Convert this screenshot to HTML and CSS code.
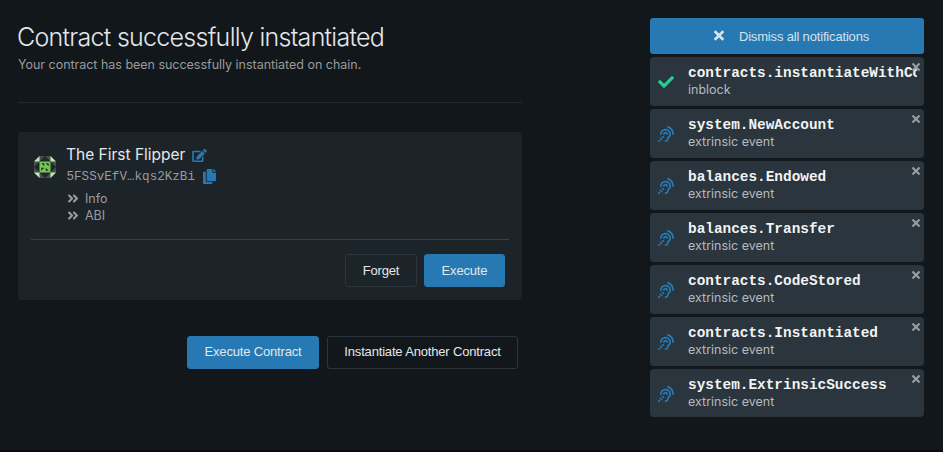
FILE: index.html
```html
<!DOCTYPE html>
<html lang="en">
<head>
<meta charset="utf-8">
<title>Contract successfully instantiated</title>
<link rel="stylesheet" href="styles.css">
</head>
<body>
<svg class="defs" aria-hidden="true">
  <symbol id="times" viewBox="0 0 352 512"><path d="M242.72 256l100.07-100.07c12.28-12.28 12.28-32.19 0-44.48l-22.24-22.24c-12.28-12.28-32.19-12.28-44.48 0L176 189.28 75.93 89.21c-12.28-12.28-32.19-12.28-44.48 0L9.21 111.45c-12.28 12.28-12.28 32.19 0 44.48L109.28 256 9.21 356.07c-12.28 12.28-12.28 32.19 0 44.48l22.24 22.24c12.28 12.28 32.2 12.28 44.48 0L176 322.72l100.07 100.07c12.28 12.28 32.2 12.28 44.48 0l22.24-22.24c12.28-12.28 12.28-32.19 0-44.48L242.72 256z"/></symbol>
  <symbol id="check" viewBox="0 0 512 512"><path d="M173.898 439.404l-166.4-166.4c-9.997-9.997-9.997-26.206 0-36.204l36.203-36.204c9.997-9.998 26.207-9.998 36.204 0L192 312.69 432.095 72.596c9.997-9.997 26.207-9.997 36.204 0l36.203 36.204c9.997 9.997 9.997 26.206 0 36.204l-294.4 294.401c-9.998 9.997-26.207 9.997-36.204-.001z"/></symbol>
  <symbol id="ear" viewBox="0 0 512 512"><path d="M216 260c0 15.464-12.536 28-28 28s-28-12.536-28-28c0-44.112 35.888-80 80-80s80 35.888 80 80c0 15.464-12.536 28-28 28s-28-12.536-28-28c0-13.234-10.767-24-24-24s-24 10.766-24 24zm24-176c-97.047 0-176 78.953-176 176 0 15.464 12.536 28 28 28s28-12.536 28-28c0-66.168 53.832-120 120-120s120 53.832 120 120c0 75.164-71.009 70.311-71.997 143.622L288 404c0 28.673-23.327 52-52 52-15.464 0-28 12.536-28 28s12.536 28 28 28c59.475 0 107.876-48.328 108-107.774.595-34.428 72-48.24 72-144.226 0-97.047-78.953-176-176-176zm-80 236c-17.673 0-32 14.327-32 32s14.327 32 32 32 32-14.327 32-32-14.327-32-32-32zM32 448c-17.673 0-32 14.327-32 32s14.327 32 32 32 32-14.327 32-32-14.327-32-32-32zm480-187.993c0-1.518-.012-3.025-.045-4.531C510.076 140.525 436.157 38.47 327.994 1.511c-14.633-4.998-30.549 2.809-35.55 17.442-5 14.633 2.81 30.549 17.442 35.55 85.906 29.354 144.61 110.513 146.077 201.953l.003.188c.026 1.118.033 2.236.033 3.363 0 15.464 12.536 28 28 28s28.001-12.536 28.001-28zM152.971 439.029l-80-80L39.03 392.97l80 80 33.941-33.941z"/></symbol>
  <symbol id="edit" viewBox="0 0 576 512"><path d="M402.6 83.2l90.2 90.2c3.8 3.8 3.8 10 0 13.8L274.4 405.6l-92.8 10.3c-12.4 1.4-22.9-9.1-21.5-21.5l10.3-92.8L388.8 83.2c3.8-3.8 10-3.8 13.8 0zm162-22.9l-48.8-48.8c-15.2-15.2-39.9-15.2-55.2 0l-35.4 35.4c-3.8 3.8-3.8 10 0 13.8l90.2 90.2c3.8 3.8 10 3.8 13.8 0l35.4-35.4c15.2-15.3 15.2-40 0-55.2zM384 346.2V448H64V128h229.8c3.2 0 6.2-1.3 8.5-3.5l40-40c7.6-7.6 2.2-20.5-8.5-20.5H48C21.5 64 0 85.5 0 112v352c0 26.5 21.5 48 48 48h352c26.5 0 48-21.5 48-48V306.2c0-10.7-12.9-16-20.5-8.5l-40 40c-2.2 2.3-3.5 5.3-3.5 8.5z"/></symbol>
  <symbol id="copy" viewBox="0 0 448 512"><path d="M320 448v40c0 13.255-10.745 24-24 24H24c-13.255 0-24-10.745-24-24V120c0-13.255 10.745-24 24-24h72v296c0 30.879 25.121 56 56 56h168zm0-344V0H152c-13.255 0-24 10.745-24 24v368c0 13.255 10.745 24 24 24h272c13.255 0 24-10.745 24-24V128H344c-13.2 0-24-10.8-24-24zm120.971-31.029L375.029 7.029A24 24 0 0 0 358.059 0H352v96h96v-6.059a24 24 0 0 0-7.029-16.97z"/></symbol>
  <symbol id="angles" viewBox="0 0 448 512"><path d="M224.3 273l-136 136c-9.4 9.4-24.6 9.4-33.9 0l-22.6-22.6c-9.4-9.4-9.4-24.6 0-33.9l96.4-96.4-96.4-96.4c-9.4-9.4-9.4-24.6 0-33.9L54.3 103c9.4-9.4 24.6-9.4 33.9 0l136 136c9.5 9.4 9.5 24.6.1 34zm192-34l-136-136c-9.4-9.4-24.6-9.4-33.9 0l-22.6 22.6c-9.4 9.4-9.4 24.6 0 33.9l96.4 96.4-96.4 96.4c-9.4 9.4-9.4 24.6 0 33.9l22.6 22.6c9.4 9.4 24.6 9.4 33.9 0l136-136c9.4-9.2 9.4-24.4 0-33.8z"/></symbol>
</svg>
<div class="page">
  <main class="main">
    <h1>Contract successfully instantiated</h1>
    <p class="lead">Your contract has been successfully instantiated on chain.</p>
    <hr class="rule">
    <section class="card">
      <div class="contract">
        <svg class="identicon" viewBox="0 0 24 24">
          <path class="shade" d="M6 0h12l6 6v12l-6 6H6l-6-6V6z"/>
          <path class="ink" d="M6 6l6-6 6 6v12l-6 6-6-6zM6 6l-6 6 6 6zM18 6l6 6-6 6z"/>
          <path class="pale" d="M6 0v6H0zM18 0v6h6zM6 24v-6H0zM18 24v-6h6z"/>
          <path class="leaf" d="M6 6h12v12H6z"/>
          <path class="ink" d="M8 8h3.2v3.2zM16 8h-3.2l3.2 3.2zM8 16v-3.2h3.2zM16 16l-3.2-3.2v3.2z"/>
        </svg>
        <div class="details">
          <div class="name"><span>The First Flipper</span><svg class="edit"><use href="#edit"/></svg></div>
          <div class="address"><span>5FSSvEfV…kqs2KzBi</span><svg class="copy"><use href="#copy"/></svg></div>
          <div class="toggle"><svg class="angles"><use href="#angles"/></svg><span>Info</span></div>
          <div class="toggle"><svg class="angles"><use href="#angles"/></svg><span>ABI</span></div>
        </div>
      </div>
      <div class="card-actions">
        <button class="btn forget">Forget</button>
        <button class="btn primary execute">Execute</button>
      </div>
    </section>
    <div class="actions">
      <button class="btn primary run">Execute Contract</button>
      <button class="btn another">Instantiate Another Contract</button>
    </div>
  </main>
  <aside class="notes">
    <button class="dismiss"><svg class="dismiss-x"><use href="#times"/></svg><span>Dismiss all notifications</span></button>
    <div class="note"><svg class="status done"><use href="#check"/></svg><div class="text"><div class="event">contracts.instantiateWithCode</div><div class="kind">inblock</div></div><svg class="close"><use href="#times"/></svg></div>
    <div class="note"><svg class="status"><use href="#ear"/></svg><div class="text"><div class="event">system.NewAccount</div><div class="kind">extrinsic event</div></div><svg class="close"><use href="#times"/></svg></div>
    <div class="note"><svg class="status"><use href="#ear"/></svg><div class="text"><div class="event">balances.Endowed</div><div class="kind">extrinsic event</div></div><svg class="close"><use href="#times"/></svg></div>
    <div class="note"><svg class="status"><use href="#ear"/></svg><div class="text"><div class="event">balances.Transfer</div><div class="kind">extrinsic event</div></div><svg class="close"><use href="#times"/></svg></div>
    <div class="note"><svg class="status"><use href="#ear"/></svg><div class="text"><div class="event">contracts.CodeStored</div><div class="kind">extrinsic event</div></div><svg class="close"><use href="#times"/></svg></div>
    <div class="note"><svg class="status"><use href="#ear"/></svg><div class="text"><div class="event">contracts.Instantiated</div><div class="kind">extrinsic event</div></div><svg class="close"><use href="#times"/></svg></div>
    <div class="note"><svg class="status"><use href="#ear"/></svg><div class="text"><div class="event">system.ExtrinsicSuccess</div><div class="kind">extrinsic event</div></div><svg class="close"><use href="#times"/></svg></div>
  </aside>
</div>
</body>
</html>
```
FILE: styles.css
```css
* { box-sizing: border-box; }
body {
  margin: 0;
  background: #11171a;
  color: #9a9b9d;
  font: 13px/17px Inter, sans-serif;
}
svg { display: block; flex: none; fill: currentColor; }
.defs { position: absolute; width: 0; height: 0; }
.page {
  display: flex;
  justify-content: space-between;
  height: 452px;
  padding: 18px 19px 0 18px;
  border-bottom: 2px solid #0a0b10;
  overflow: hidden;
}
.main { width: 504px; }
h1 {
  margin: 0 0 0 -1px;
  padding-top: 3px;
  font-size: 25px;
  line-height: 32px;
  font-weight: 300;
  letter-spacing: -0.72px;
  color: #e3e6ea;
  white-space: nowrap;
}
.lead { margin: 3px 0 0; font-size: 12.5px; letter-spacing: -0.02px; }
.rule { margin: 29px 0 0; border: 0; border-top: 1px solid #23292d; }
.card {
  height: 168px;
  margin-top: 29px;
  padding: 13px 13px 0;
  border-radius: 4px;
  background: #1d2429;
}
.contract {
  display: flex;
  gap: 11px;
  height: 95px;
  padding-left: 3px;
  border-bottom: 1px solid #31434b;
}
.identicon { width: 22px; height: 22px; margin-top: 11px; }
.shade { fill: #4a4c4e; }
.ink { fill: #23282b; }
.pale { fill: #bdeaae; }
.leaf { fill: #74c852; }
.name { display: flex; align-items: center; gap: 7px; height: 20px; font-size: 15.5px; color: #e4e7ea; }
.name span { margin: -2px 0 0 -1px; }
.edit { width: 15px; height: 13px; margin-top: 1px; color: #2679b3; }
.address { display: flex; align-items: center; gap: 8px; height: 23px; font: 12.6px/20px "Liberation Mono", monospace; }
.address span { margin-left: -0.5px; }
.copy { width: 13px; height: 15px; color: #2679b3; }
.toggle { display: flex; align-items: center; gap: 6px; height: 17px; font-size: 12.5px; }
.toggle:nth-child(3) { margin-top: 2px; }
.angles { width: 12px; height: 13px; }
.card-actions { display: flex; justify-content: flex-end; gap: 7px; padding: 14px 4px 0 0; }
.btn {
  height: 33px;
  padding: 0 0 1px;
  border: 1px solid #2b353b;
  border-radius: 3px;
  background: transparent;
  color: #e4e7ea;
  font: 13px/16px "Liberation Sans", Arial, sans-serif;
  letter-spacing: -0.17px;
  white-space: nowrap;
}
.primary { border-color: #2679b3; background: #2679b3; }
.forget { width: 72px; padding-bottom: 0; }
.execute { width: 81px; padding-bottom: 0; }
.actions { display: flex; justify-content: flex-end; gap: 8px; padding: 36px 4px 0 0; }
.run { width: 132px; }
.another { width: 191px; }
.notes { display: flex; flex-direction: column; gap: 3px; width: 274px; }
.dismiss {
  display: flex;
  align-items: center;
  justify-content: center;
  gap: 15px;
  height: 36px;
  padding: 1px 0 0 9px;
  border: 0;
  border-radius: 3px;
  background: #2679b3;
  color: #d5e2ec;
  font: 13px/16px "Liberation Sans", Arial, sans-serif;
  letter-spacing: -0.17px;
}
.dismiss-x { width: 10px; height: 15px; margin-top: -2px; }
.note {
  position: relative;
  display: flex;
  height: 49px;
  padding: 8px 7px 0 8px;
  border-radius: 4px;
  background: #2a353d;
}
.note:last-child { height: 48px; }
.status { width: 16px; height: 16px; margin: 9px 14px 0 0; color: #2679b3; }
.done { color: #23cf91; }
.text { min-width: 0; flex: 1; overflow: hidden; }
.event {
  overflow: hidden;
  font: bold 14.4px/17px "Liberation Mono", monospace;
  color: #f1f3f4;
  white-space: nowrap;
}
.kind { margin-top: -1px; color: #b5babe; font-size: 12.5px; }
.close { position: absolute; top: 3px; right: 4px; width: 8px; height: 14px; color: #999da1; }
```
